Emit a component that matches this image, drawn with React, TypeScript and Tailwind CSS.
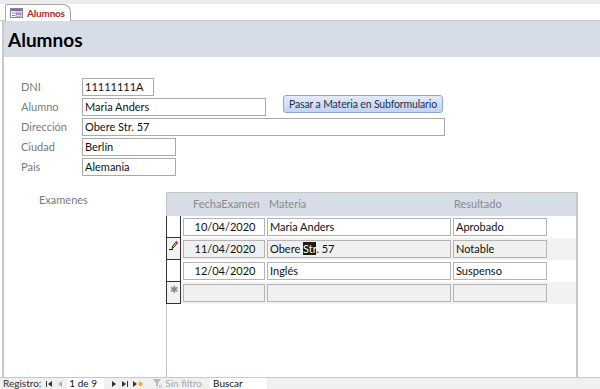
import React from "react";

const font = { fontFamily: "Lato, 'Liberation Sans', sans-serif" };

const Field = ({ label, value, w }: { label: string; value: string; w: string }) => (
  <div className="flex items-center h-[18px] mb-[2px]">
    <span className="w-[61px] text-[#7a7a7a]">{label}</span>
    <div className={`${w} h-[18px] border border-[#a9a9a9] bg-white pl-[2px] leading-[16px] text-[#111]`}>{value}</div>
  </div>
);

const FormIcon = () => (
  <svg width="13" height="10" viewBox="0 0 13 10">
    <rect x="0.5" y="0.5" width="12" height="9" fill="#fff" stroke="#7b86a8" />
    <rect x="1" y="1" width="11" height="2" fill="#b05a8a" />
    <rect x="2" y="4.5" width="3" height="1" fill="#7b86a8" />
    <rect x="6" y="4" width="5" height="1.6" fill="none" stroke="#7b86a8" strokeWidth="0.8" />
    <rect x="2" y="7" width="3" height="1" fill="#7b86a8" />
    <rect x="6" y="6.6" width="5" height="1.6" fill="none" stroke="#7b86a8" strokeWidth="0.8" />
  </svg>
);

const Pencil = () => (
  <svg width="9" height="10" viewBox="0 0 9 10">
    <line x1="0" y1="9.5" x2="4" y2="9.5" stroke="#111" strokeWidth="1" />
    <path d="M3 8.5 L3.6 6 L7.2 1.6 L8.6 2.8 L5 7.2 Z" fill="#f2c400" stroke="#111" strokeWidth="0.8" />
    <path d="M6.6 2.3 L7.2 1.6 L8.6 2.8 L8 3.5 Z" fill="#d42020" />
  </svg>
);

const rows = [
  { date: "10/04/2020", mat: "Maria Anders", res: "Aprobado", alt: false },
  { date: "11/04/2020", mat: "", res: "Notable", alt: true, edit: true },
  { date: "12/04/2020", mat: "Inglés", res: "Suspenso", alt: false },
];

const Cell = ({ w, alt, children, center }: { w: string; alt: boolean; children?: React.ReactNode; center?: boolean }) => (
  <div
    className={`${w} h-[18px] border border-[#b4b4b4] leading-[16px] pl-[2px] text-[#111] ${alt ? "bg-[#f0f0f0]" : "bg-white"} ${center ? "text-center" : ""}`}
  >
    {children}
  </div>
);

export default function App() {
  return (
    <div className="w-[600px] h-[389px] overflow-hidden bg-white flex flex-col text-[11px]" style={font}>
      {/* tab strip */}
      <div className="h-[21px] flex flex-col bg-white">
        <div className="h-[4px] bg-[#ececec]" />
        <div className="flex-1 flex items-end border-b border-[#c8c8c8] pl-[5px]">
          <div className="h-[17px] w-[66px] -mb-px flex items-center gap-[4px] pl-[4px] border border-b-0 border-[#a8a8a8] rounded-tr-[8px] rounded-tl-[2px] bg-white whitespace-nowrap">
            <FormIcon />
            <span className="text-[#b32a2a] font-bold text-[10px] tracking-[-0.2px]">Alumnos</span>
          </div>
        </div>
      </div>

      <div className="flex-1 flex flex-col border-l-2 border-[#c9c9c9] ml-[2px] min-h-0">
        {/* form header */}
        <div className="h-[36px] bg-[#d7dde7] pl-[4px] flex items-center">
          <span className="text-[19px] font-bold text-black leading-none">Alumnos</span>
        </div>

        {/* form body */}
        <div className="flex-1 flex flex-col pt-[21px] min-h-0">
          <div className="pl-[17px]">
            <Field label="DNI" value="11111111A" w="w-[72px]" />
            <div className="flex items-start">
              <Field label="Alumno" value="Maria Anders" w="w-[184px]" />
              <button className="ml-[17px] -mt-[3px] w-[160px] h-[18px] rounded-[3px] border border-[#8aa6d6] bg-gradient-to-b from-[#e3ebf9] to-[#c3d4f0] text-[#1d2f55] text-[10.5px] tracking-[-0.15px] leading-[16px] whitespace-nowrap">
                Pasar a Materia en Subformulario
              </button>
            </div>
            <Field label="Dirección" value="Obere Str. 57" w="w-[363px]" />
            <Field label="Ciudad" value="Berlín" w="w-[94px]" />
            <Field label="Pais" value="Alemania" w="w-[94px]" />
          </div>

          <div className="flex-1 flex pt-[14px] min-h-0">
            <span className="pl-[35px] w-[162px] text-[#7a7a7a]">Examenes</span>
            <div className="w-[412px] border-l border-t border-r-2 border-[#c4c4c4] flex flex-col">
              <div className="h-[23px] bg-[#d7dde7] flex items-center text-[#8a8a8a]">
                <span className="w-[16px]" />
                <span className="w-[84px] pl-[10px]">FechaExamen</span>
                <span className="w-[185px] pl-[2px]">Materia</span>
                <span className="pl-[2px]">Resultado</span>
              </div>
              {rows.map((r, i) => (
                <div key={i} className={`h-[22px] flex items-center ${r.alt ? "bg-[#f2f2f2]" : "bg-white"}`}>
                  <div className="w-[15px] h-[22px] border-r border-b border-l -ml-px border-[#333] flex items-start justify-center pt-[2px]">
                    {r.edit ? <Pencil /> : null}
                  </div>
                  <div className="flex gap-[2px] ml-[2px]">
                    <Cell w="w-[82px]" alt={r.alt} center>
                      {r.date}
                    </Cell>
                    <Cell w="w-[184px]" alt={r.alt}>
                      {r.edit ? (
                        <>
                          Obere <span className="bg-[#1b1b1b] text-white">Str</span>. 57
                        </>
                      ) : (
                        r.mat
                      )}
                    </Cell>
                    <Cell w="w-[94px]" alt={r.alt}>
                      {r.res}
                    </Cell>
                  </div>
                </div>
              ))}
              <div className="h-[22px] flex items-center bg-[#f2f2f2]">
                <div className="w-[15px] h-[22px] border-r border-b border-l -ml-px border-[#333] flex items-start justify-center text-[#8a8a8a] text-[10px] leading-[14px]">
                  ✱
                </div>
                <div className="flex gap-[2px] ml-[2px]">
                  <Cell w="w-[82px]" alt />
                  <Cell w="w-[184px]" alt />
                  <Cell w="w-[94px]" alt />
                </div>
              </div>
              <div className="flex-1" />
            </div>
          </div>
        </div>
      </div>

      {/* status bar */}
      <div className="h-[12px] bg-[#f0f0f0] border-t border-[#c8c8c8] flex items-center overflow-hidden text-[10px] leading-[11px] pl-[3px]">
        <span className="text-[#333]">Registro:</span>
        <svg className="ml-[5px]" width="7" height="6" viewBox="0 0 7 6">
          <rect x="0" y="0" width="1" height="6" fill="#333" />
          <path d="M6 0 L2 3 L6 6 Z" fill="#333" />
        </svg>
        <svg className="ml-[5px]" width="4" height="6" viewBox="0 0 4 6">
          <path d="M4 0 L0 3 L4 6 Z" fill="#b0b0b0" />
        </svg>
        <div className="ml-[5px] w-[37px] h-[11px] bg-white pl-[2px] text-[#111]">1 de 9</div>
        <svg className="ml-[8px]" width="4" height="6" viewBox="0 0 4 6">
          <path d="M0 0 L4 3 L0 6 Z" fill="#333" />
        </svg>
        <svg className="ml-[6px]" width="7" height="6" viewBox="0 0 7 6">
          <path d="M0 0 L4 3 L0 6 Z" fill="#333" />
          <rect x="5" y="0" width="1" height="6" fill="#333" />
        </svg>
        <svg className="ml-[4px]" width="10" height="8" viewBox="0 0 10 8">
          <path d="M0 1 L4 4 L0 7 Z" fill="#333" />
          <circle cx="7.5" cy="4" r="2.2" fill="#f0b040" />
        </svg>
        <svg className="ml-[10px]" width="10" height="10" viewBox="0 0 10 10">
          <path d="M0 0 H8 L5 4 V8 L3 7 V4 Z" fill="#b8b8b8" />
          <path d="M6 6 L9 9 M9 6 L6 9" stroke="#b8b8b8" strokeWidth="1" />
        </svg>
        <span className="ml-[2px] text-[#a8a8a8]">Sin filtro</span>
        <div className="ml-[8px] w-[57px] h-[11px] bg-white pl-[3px] text-[#111]">Buscar</div>
      </div>
    </div>
  );
}
